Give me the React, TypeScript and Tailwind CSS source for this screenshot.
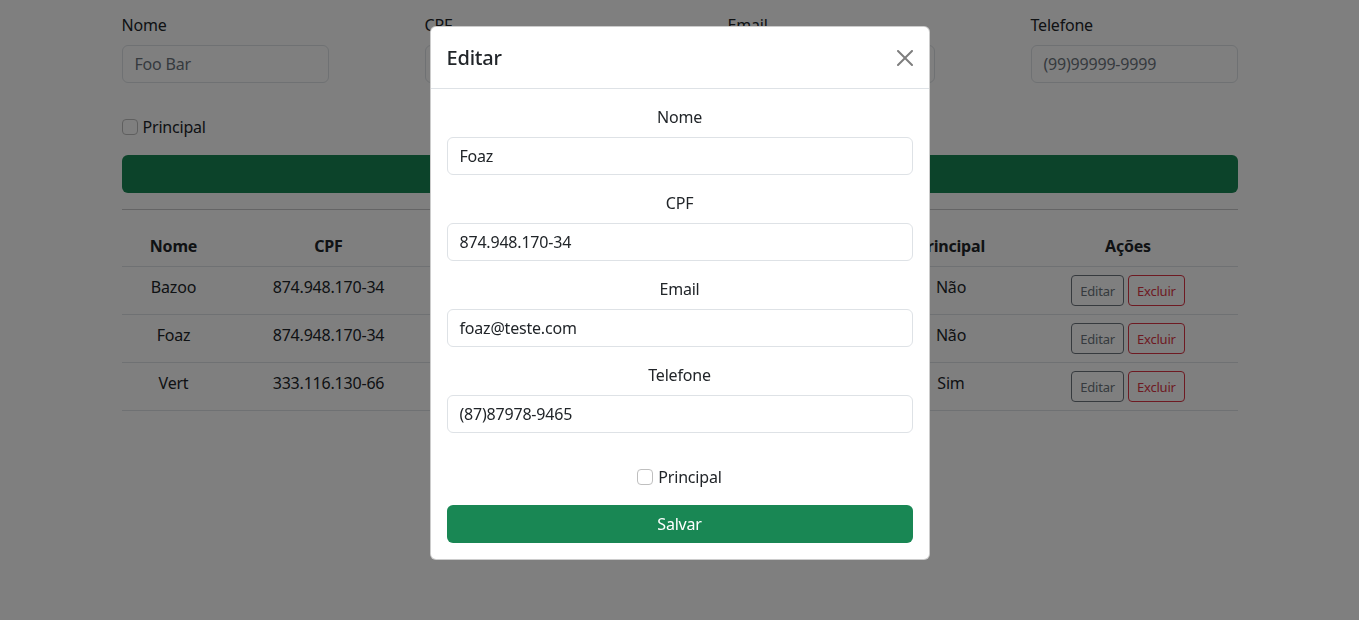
import React from "react";

const rows = [
  { nome: "Bazoo", cpf: "874.948.170-34", principal: "Não" },
  { nome: "Foaz", cpf: "874.948.170-34", principal: "Não" },
  { nome: "Vert", cpf: "333.116.130-66", principal: "Sim" },
];

function PageField({ label, placeholder }: { label: string; placeholder: string }) {
  return (
    <div className="flex flex-col">
      <label className="mb-2 text-[16px] leading-6 text-[#212529]">{label}</label>
      <div className="flex h-[38px] items-center rounded-md border border-[#dee2e6] bg-white px-3 text-[16px] text-[#6c757d]">
        {placeholder}
      </div>
    </div>
  );
}

function ModalField({ label, value }: { label: string; value: string }) {
  return (
    <div className="flex flex-col">
      <label className="mb-2 text-center text-[16px] leading-6 text-[#212529]">{label}</label>
      <div className="flex h-[38px] items-center rounded-md border border-[#dee2e6] bg-white px-3 text-[16px] text-[#212529]">
        {value}
      </div>
    </div>
  );
}

export default function App() {
  return (
    <div className="relative min-h-[620px] bg-white font-['Noto_Sans',sans-serif] tracking-[-0.2px] text-[#212529]">
      <div className="mx-auto w-[1116px] pt-[13px]">
        <div className="grid grid-cols-4 gap-x-[96px]">
          <PageField label="Nome" placeholder="Foo Bar" />
          <PageField label="CPF" placeholder="" />
          <PageField label="Email" placeholder="" />
          <PageField label="Telefone" placeholder="(99)99999-9999" />
        </div>
        <div className="mt-8 flex h-6 items-center">
          <span className="h-4 w-4 rounded-[4px] border border-[#bfbfbf] bg-white" />
          <span className="ml-[5px] text-[16px] leading-6">Principal</span>
        </div>
        <div className="mt-4 h-[38px] w-full rounded-md bg-[#198754]" />
        <hr className="my-4 border-t border-[#c8c9ca]" />
        <table className="w-full table-fixed border-collapse text-[16px]">
          <colgroup>
            <col className="w-[104px]" />
            <col className="w-[206px]" />
            <col className="w-[250px]" />
            <col className="w-[202px]" />
            <col className="w-[135px]" />
            <col className="w-[219px]" />
          </colgroup>
          <thead>
            <tr className="border-b border-[#dee2e6]">
              {["Nome", "CPF", "", "", "Principal", "Ações"].map((h, i) => (
                <th key={i} className="h-[40px] p-2 text-center align-top font-bold leading-6">
                  {h}
                </th>
              ))}
            </tr>
          </thead>
          <tbody>
            {rows.map((r) => (
              <tr key={r.nome} className="border-b border-[#dee2e6]">
                <td className="p-2 text-center align-top leading-6">{r.nome}</td>
                <td className="p-2 text-center align-top leading-6">{r.cpf}</td>
                <td className="p-2" />
                <td className="p-2" />
                <td className="p-2 text-center align-top leading-6">{r.principal}</td>
                <td className="p-2 text-center align-top leading-6">
                  <div className="flex justify-center gap-1">
                    <button className="h-[31px] rounded-[4px] border border-[#6c757d] px-2 text-[13px] text-[#6c757d]">
                      Editar
                    </button>
                    <button className="h-[31px] rounded-[4px] border border-[#dc3545] px-2 text-[13px] text-[#dc3545]">
                      Excluir
                    </button>
                  </div>
                </td>
              </tr>
            ))}
          </tbody>
        </table>
      </div>

      <div className="fixed inset-0 bg-black/50" />

      <div className="fixed inset-0 flex justify-center pt-[26px]">
        <div className="h-fit w-[500px] rounded-md border border-black/20 bg-white">
          <div className="flex h-[62px] items-center justify-between border-b border-[#dee2e6] px-4">
            <h5 className="text-[20px] font-medium leading-[30px] text-[#212529]">Editar</h5>
            <svg width="16" height="16" viewBox="0 0 16 16" className="opacity-50">
              <path
                d="M.293.293a1 1 0 0 1 1.414 0L8 6.586 14.293.293a1 1 0 1 1 1.414 1.414L9.414 8l6.293 6.293a1 1 0 0 1-1.414 1.414L8 9.414l-6.293 6.293a1 1 0 0 1-1.414-1.414L6.586 8 .293 1.707a1 1 0 0 1 0-1.414"
                fill="#000"
              />
            </svg>
          </div>
          <div className="flex flex-col p-4">
            <div className="flex flex-col gap-4">
              <ModalField label="Nome" value="Foaz" />
              <ModalField label="CPF" value="874.948.170-34" />
              <ModalField label="Email" value="foaz@teste.com" />
              <ModalField label="Telefone" value="(87)87978-9465" />
            </div>
            <div className="mt-8 flex h-6 items-center justify-center">
              <span className="h-4 w-4 rounded-[4px] border border-[#bfbfbf] bg-white" />
              <span className="ml-[5px] text-[16px] leading-6 text-[#212529]">Principal</span>
            </div>
            <button className="mt-4 flex h-[38px] w-full items-center justify-center rounded-md bg-[#198754] text-[16px] text-white">
              Salvar
            </button>
          </div>
        </div>
      </div>
    </div>
  );
}
